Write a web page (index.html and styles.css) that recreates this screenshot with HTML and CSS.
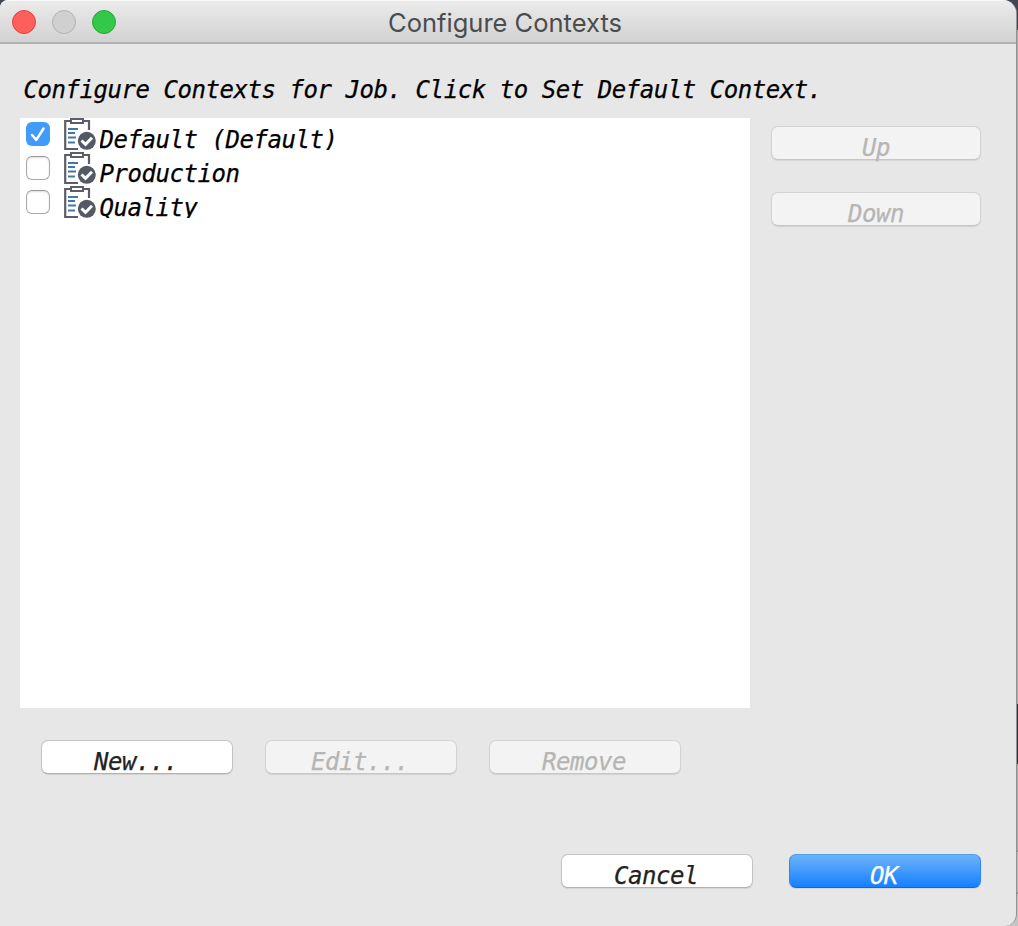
FILE: index.html
```html
<!DOCTYPE html>
<html lang="en">
<head>
<meta charset="utf-8">
<title>Configure Contexts</title>
<link rel="stylesheet" href="styles.css">
</head>
<body>
<svg width="0" height="0" class="defs" aria-hidden="true">
  <symbol id="context" viewBox="0 0 32 32">
    <path d="M7 3H1.200V31H14M18.500 3H25V12" fill="none" stroke="#5b5e69" stroke-width="2.200"/>
    <rect x="7" y="1" width="12" height="4" fill="#fff" stroke="#5b5e69" stroke-width="2"/>
    <path d="M4 11H14M4 15H11M4 19.500H12M4 24.500H11" stroke="#4479a5" stroke-width="2"/>
    <circle cx="22.800" cy="22.800" r="9" fill="#555965"/>
    <path d="M17.500 22.500L21.500 26.300L28 19.800" fill="none" stroke="#fff" stroke-width="3"/>
  </symbol>
</svg>
<main class="window">
  <header class="titlebar">
    <div class="lights"><i class="light red"></i><i class="light gray"></i><i class="light green"></i></div>
    <h1 class="title">Configure Contexts</h1>
  </header>
  <p class="prompt">Configure Contexts for Job. Click to Set Default Context.</p>
  <section class="content">
    <ul class="list">
      <li class="row"><span class="check checked"><svg viewBox="0 0 24 24"><path d="M6 13L10.300 17.800L17.500 6.500" fill="none" stroke="#fff" stroke-width="2.500" stroke-linecap="round" stroke-linejoin="round"/></svg></span><svg class="icon"><use href="#context"/></svg><span class="label">Default (Default)</span></li>
      <li class="row"><span class="check"></span><svg class="icon"><use href="#context"/></svg><span class="label">Production</span></li>
      <li class="row"><span class="check"></span><svg class="icon"><use href="#context"/></svg><span class="label">Quality</span></li>
    </ul>
    <div class="order">
      <button class="button" disabled>Up</button>
      <button class="button" disabled>Down</button>
    </div>
  </section>
  <div class="actions">
    <button class="button">New...</button>
    <button class="button" disabled>Edit...</button>
    <button class="button" disabled>Remove</button>
  </div>
  <footer class="footer">
    <button class="button">Cancel</button>
    <button class="button primary">OK</button>
  </footer>
</main>
</body>
</html>
```
FILE: styles.css
```css
* { box-sizing: border-box; }
body {
  margin: 0;
  width: 1018px;
  height: 926px;
  overflow: hidden;
  background: linear-gradient(#414652 0 30px, #a9a9a9 30px 704px, #30323d 704px 764px, #aaa 764px 850px, #888 850px 852px, #bbb 852px 892px, #888 892px 894px, #c4c4c4 894px);
  font: italic 24px/44px "DejaVu Sans Mono", monospace;
  letter-spacing: -0.445px;
  -webkit-text-stroke: 0.25px;
  color: #000;
}
.defs { display: block; }
.window {
  width: 1017px;
  height: 926px;
  border-right: 1px solid #929292;
  border-radius: 8px 14px 12px 0;
  background: #e7e7e7;
  overflow: hidden;
}
.titlebar {
  display: grid;
  grid-template-columns: 128px 1fr 134px;
  align-items: start;
  height: 44px;
  border-top: 1px solid #f8f8f8;
  border-bottom: 2px solid #b1b1b1;
  background: linear-gradient(#ebebeb, #d2d2d2);
}
.lights { display: flex; gap: 16px; padding: 9px 0 0 12px; }
.light { width: 24px; height: 24px; border: 1px solid; border-radius: 50%; }
.red { background: #fd605c; border-color: #e2423f; }
.gray { background: #d0d0d0; border-color: #b1b1b1; }
.green { background: #34c84a; border-color: #22aa35; }
.title {
  margin: 0;
  padding-top: 2px;
  text-align: center;
  font: 400 25.500px/40px Inter, sans-serif;
  letter-spacing: 0;
  -webkit-text-stroke: 0;
  color: #4c4c4c;
}
.prompt {
  height: 74px;
  margin: 0;
  padding: 24px 0 0 23.500px;
  white-space: nowrap;
}
.content { display: flex; gap: 21px; padding-left: 20px; }
.list {
  width: 730px;
  height: 590px;
  margin: 0;
  padding: 0;
  list-style: none;
  background: #fff;
}
.row { display: flex; height: 34px; padding-left: 6px; }
.check {
  width: 24px;
  height: 24px;
  margin: 4px 14px 0 0;
  border: 1px solid #aaa;
  border-top-color: #999;
  border-radius: 6px;
  background: #fff;
  box-shadow: inset 0 1px 2px #ddd;
}
.checked { border: 0; background: #419bf9; box-shadow: none; }
.checked svg { display: block; width: 24px; height: 24px; }
.icon { width: 32px; height: 32px; margin-right: 3.500px; }
.label { height: 32px; overflow: hidden; white-space: pre; }
.order { display: flex; flex-direction: column; gap: 32px; width: 210px; padding-top: 8px; }
.button {
  width: 192px;
  height: 34px;
  padding: 0 2px 0 0;
  border: 1px solid #c4c4c4;
  border-bottom-color: #b0b0b0;
  border-radius: 7px;
  background: #fff;
  box-shadow: 0 1px 1px #d3d3d3;
  display: flex;
  justify-content: center;
  align-items: flex-start;
  font: inherit;
  letter-spacing: inherit;
  line-height: 42px;
  color: #222;
}
.order .button { width: 210px; padding: 0; }
.button:disabled { background: #f3f3f3; border-color: #d3d3d3; border-bottom-color: #c6c6c6; color: #b5b5b5; }
.primary {
  border-color: #4d9ef1 #2c85f5 #0b63ef;
  background: linear-gradient(#6db3fa, #1580ff);
  color: #fff;
}
.actions { display: flex; gap: 32px; padding: 32px 0 0 41px; }
.footer { display: flex; justify-content: flex-end; gap: 36px; padding: 80px 35px 0 0; }
```
